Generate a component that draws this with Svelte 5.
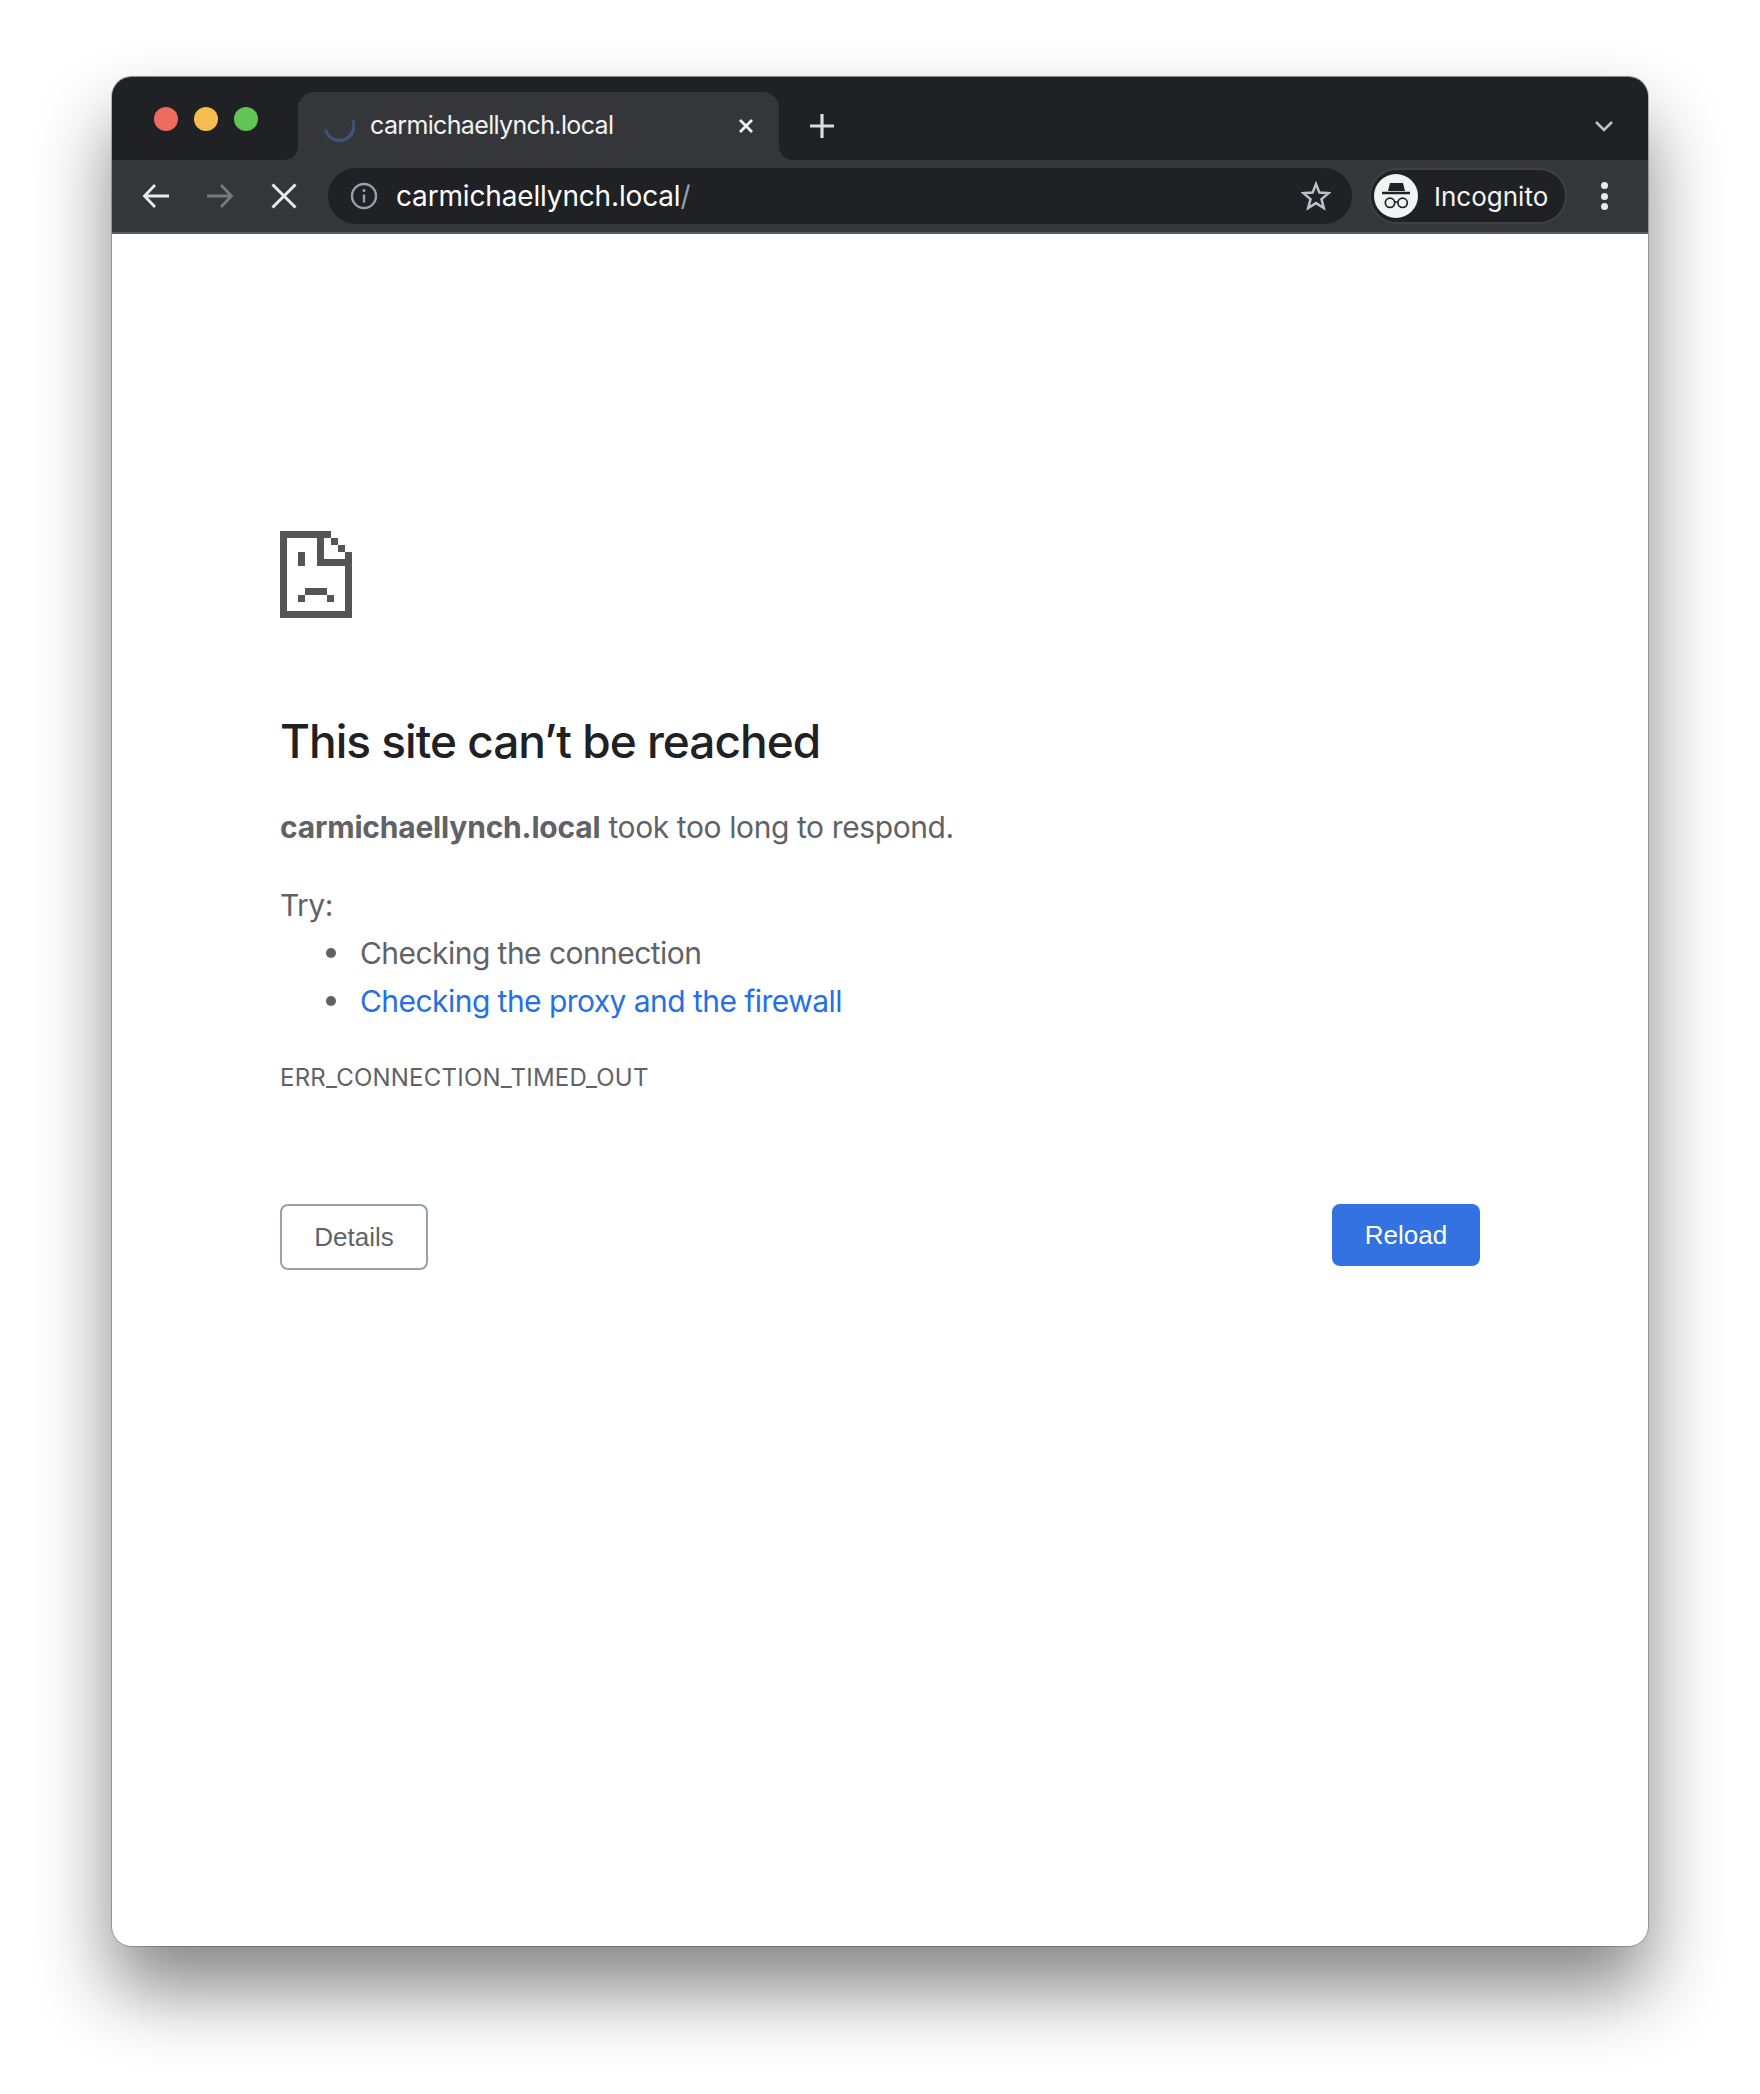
<script>
  const dots = ['#ee6a5f', '#f5bd4f', '#61c454'];
  const tips = ['Checking the connection'];
</script>

<div class="page">
  <div class="window">
    <div class="strip">
      <div class="cap">
        {#each dots as c}
          <span class="dot" style="background: {c}"></span>
        {/each}
      </div>
      <div class="tabwrap">
        <div class="tab">
          <svg class="spinner" viewBox="0 0 32 34" width="32" height="34">
            <path d="M30.1 12 A14.4 14.4 0 0 1 3 22" fill="none" stroke="#3c5478" stroke-width="3.4" stroke-linecap="round" />
          </svg>
          <span class="tabtitle">carmichaellynch.local</span>
          <svg class="tabclose" viewBox="0 0 16 16" width="16" height="16">
            <path d="M2 2 L14 14 M14 2 L2 14" stroke="#f1f3f4" stroke-width="2.8" />
          </svg>
        </div>
      </div>
      <div class="rest">
        <svg class="plus" viewBox="0 0 24 24" width="24" height="24">
          <path d="M12 0 V24 M0 12 H24" stroke="#dadce0" stroke-width="3.2" />
        </svg>
        <svg class="chevron" viewBox="0 0 20 12" width="20" height="12">
          <path d="M2 2 L10 10 L18 2" fill="none" stroke="#bdc1c6" stroke-width="2.6" />
        </svg>
      </div>
    </div>

    <div class="toolbar">
      <div class="navbtn">
        <svg viewBox="0 0 28 26" width="28" height="26">
          <path d="M27 13 H3 M13 2 L2.5 13 L13 24" fill="none" stroke="#e8eaed" stroke-width="2.8" />
        </svg>
      </div>
      <div class="navbtn">
        <svg viewBox="0 0 28 26" width="28" height="26">
          <path d="M1 13 H25 M15 2 L25.5 13 L15 24" fill="none" stroke="#77787b" stroke-width="2.8" />
        </svg>
      </div>
      <div class="navbtn">
        <svg viewBox="0 0 26 26" width="26" height="26">
          <path d="M1.5 1.5 L24.5 24.5 M24.5 1.5 L1.5 24.5" stroke="#e8eaed" stroke-width="3" />
        </svg>
      </div>
      <div class="omnibox">
        <svg class="info" viewBox="0 0 28 28" width="28" height="28">
          <circle cx="14" cy="14" r="12" fill="none" stroke="#9aa0a6" stroke-width="2.4" />
          <path d="M14 12.5 V20.5" stroke="#9aa0a6" stroke-width="2.4" />
          <circle cx="14" cy="8.6" r="1.5" fill="#9aa0a6" />
        </svg>
        <span class="url">carmichaellynch.local<span class="slash">/</span></span>
        <svg class="star" viewBox="0 0 30 30" width="30" height="30">
          <path d="M15 3 L18.4 11.6 L27.6 12.2 L20.5 18.1 L22.8 27 L15 22.1 L7.2 27 L9.5 18.1 L2.4 12.2 L11.6 11.6 Z" fill="none" stroke="#bdc1c6" stroke-width="2.5" stroke-linejoin="miter" />
        </svg>
      </div>
      <div class="pill">
        <svg class="avatar" viewBox="0 0 44 44" width="44" height="44">
          <circle cx="22" cy="22" r="22" fill="#f1f3f4" />
          <path d="M16 9 H29 L31 17 H14 Z" fill="#202124" />
          <path d="M8 19 H36" stroke="#202124" stroke-width="2.4" />
          <circle cx="16" cy="28.8" r="4.7" fill="none" stroke="#202124" stroke-width="1.7" />
          <circle cx="28.6" cy="28.8" r="4.7" fill="none" stroke="#202124" stroke-width="1.7" />
          <path d="M20.5 28 H24" stroke="#202124" stroke-width="1.5" />
        </svg>
        <span>Incognito</span>
      </div>
      <div class="kebab">
        <span></span><span></span><span></span>
      </div>
    </div>

    <main class="content">
      <svg class="sad" viewBox="0 0 72 87" width="72" height="87" shape-rendering="crispEdges">
        <path fill="#555" d="M0 0 H51 V7 H58 V14 H65 V21 H72 V87 H0 Z M7 7 V80 H65 V35 H36.5 V7 Z M43.5 7 V28 H65 V21 H58 V14 H51 V7 Z" fill-rule="evenodd" />
        <path fill="#555" d="M18 21 H25 V35 H18 Z M25 57 H47 V63.500 H25 Z M18 63.500 H25 V71 H18 Z M47 63.500 H54 V71 H47 Z" />
      </svg>

      <h1>This site can’t be reached</h1>
      <p class="reason"><strong>carmichaellynch.local</strong> took too long to respond.</p>
      <p class="try">Try:</p>
      <ul>
        {#each tips as t}
          <li>{t}</li>
        {/each}
        <li><a href="#proxy">Checking the proxy and the firewall</a></li>
      </ul>
      <div class="code">ERR_CONNECTION_TIMED_OUT</div>

      <div class="buttons">
        <button class="details">Details</button>
        <button class="reload">Reload</button>
      </div>
    </main>
  </div>
</div>

<style>
  :global(body) {
    margin: 0;
    background: #fff;
  }

  .page {
    position: relative;
    height: 2094px;
    padding: 77px 112px 0;
    box-sizing: border-box;
    overflow: hidden;
    font-family: Inter, "Liberation Sans", sans-serif;
  }

  .page::before {
    content: '';
    position: absolute;
    left: 112px;
    top: 77px;
    width: 1536px;
    height: 1869px;
    border-radius: 20px;
    box-shadow: 0 44px 76px rgba(0, 0, 0, 0.48);
  }

  .window {
    position: relative;
    width: 1536px;
    height: 1869px;
    border-radius: 20px;
    overflow: hidden;
    background: #fff;
    box-shadow: 0 0 0 1px rgba(0, 0, 0, 0.22), 0 -1px 1px rgba(0, 0, 0, 0.3);
    display: flex;
    flex-direction: column;
  }

  .strip {
    display: flex;
    height: 83px;
    background: #35363a;
  }

  .cap {
    width: 186px;
    box-sizing: border-box;
    background: #202124;
    border-bottom-right-radius: 14px;
    display: flex;
    gap: 16px;
    padding: 30px 0 0 42px;
  }

  .dot {
    width: 24px;
    height: 24px;
    border-radius: 50%;
  }

  .tabwrap {
    width: 481px;
    background: #202124;
    padding-top: 15px;
    display: flex;
  }

  .tab {
    flex: 1;
    background: #35363a;
    border-radius: 16px 16px 0 0;
    display: flex;
    align-items: center;
    padding: 0 25px 0 25px;
    color: #f1f3f4;
    font-size: 25px;
    letter-spacing: -0.65px;
    height: 68px;
  }

  .spinner {
    margin-right: 15px;
    flex: none;
  }

  .tabtitle {
    flex: 1;
    position: relative;
    top: -1px;
  }

  .tabclose {
    flex: none;
  }

  .rest {
    flex: 1;
    background: #202124;
    border-bottom-left-radius: 14px;
    display: flex;
    align-items: center;
    padding: 15px 34px 0 31px;
    justify-content: space-between;
  }

  .toolbar {
    height: 72px;
    background: #35363a;
    border-bottom: 2px solid #5b5c60;
    display: flex;
    align-items: center;
    padding-left: 12px;
  }

  .navbtn {
    width: 64px;
    display: flex;
    justify-content: center;
    align-items: center;
  }

  .omnibox {
    margin-left: 12px;
    width: 1024px;
    height: 56px;
    border-radius: 28px;
    background: #202124;
    display: flex;
    align-items: center;
    padding: 0 21px 0 22px;
    box-sizing: border-box;
    color: #fff;
    font-size: 28px;
    letter-spacing: -0.16px;
  }

  .url {
    margin-left: 18px;
    flex: 1;
  }

  .slash {
    color: #9aa0a6;
  }

  .pill {
    margin-left: 17px;
    width: 198px;
    height: 56px;
    box-sizing: border-box;
    border: 2px solid #3f4044;
    border-radius: 28px;
    background: #202124;
    display: flex;
    align-items: center;
    padding-left: 3px;
    gap: 16px;
    color: #f1f3f4;
    font-size: 26px;
  }

  .kebab {
    margin-left: 5px;
    width: 64px;
    display: flex;
    flex-direction: column;
    align-items: center;
    gap: 3.500px;
  }

  .kebab span {
    width: 7px;
    height: 7px;
    border-radius: 50%;
    background: #e8eaed;
  }

  .content {
    flex: 1;
    padding: 297px 168px 0;
  }

  .sad {
    display: block;
  }

  h1 {
    margin: 95px 0 0;
    font-size: 46px;
    font-weight: 550;
    letter-spacing: -1px;
    line-height: 56px;
    color: #202124;
  }

  p {
    margin: 0;
  }

  .reason, .try, li, .code {
    font-size: 30px;
    line-height: 48px;
    color: #5f6368;
    letter-spacing: -0.55px;
  }

  .reason {
    margin-top: 34px;
    letter-spacing: -0.4px;
  }

  .reason strong {
    letter-spacing: -0.2px;
  }

  .try {
    margin-top: 30px;
  }

  ul {
    margin: 0;
    padding-left: 80px;
    list-style: none;
  }

  li {
    position: relative;
  }

  li::before {
    content: '';
    position: absolute;
    left: -34px;
    top: 19px;
    width: 10px;
    height: 10px;
    border-radius: 50%;
    background: #5f6368;
  }

  a {
    color: #2570e4;
    text-decoration: none;
  }

  .code {
    font-size: 24px;
    letter-spacing: 0.22px;
    margin-top: 29px;
  }

  .buttons {
    margin-top: 102px;
    display: flex;
    justify-content: space-between;
    align-items: flex-start;
  }

  button {
    width: 148px;
    font-family: "Liberation Sans", Arial, sans-serif;
    font-size: 26px;
    border-radius: 8px;
    padding: 0;
  }

  .details {
    height: 66px;
    background: #fff;
    border: 2px solid #9aa0a6;
    color: #5f6368;
  }

  .reload {
    height: 62px;
    border: 0;
    background: #3372e0;
    color: #fff;
  }
</style>
